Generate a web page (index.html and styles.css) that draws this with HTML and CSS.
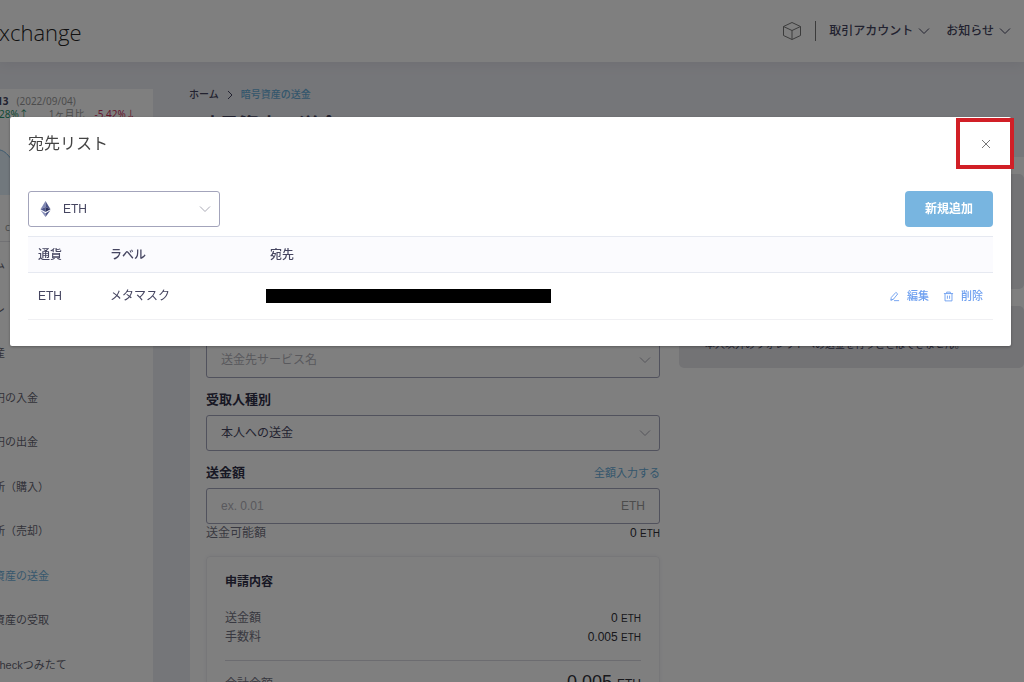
FILE: index.html
```html
<!DOCTYPE html>
<html lang="ja">
<head>
<meta charset="utf-8">
<meta name="viewport" content="width=device-width, initial-scale=1">
<title>宛先リスト</title>
<link rel="stylesheet" href="styles.css">
</head>
<body>
<header class="topbar">
  <div class="logo">xchange</div>
  <nav class="topnav">
    <svg class="cube" viewBox="0 0 20 20"><path d="M10 1.5 18.500 5.500V14.500L10 18.500 1.500 14.500V5.500ZM1.500 5.500 10 9.500 18.500 5.500M10 9.500V18.500"/></svg>
    <span class="rule"></span>
    <a class="navlink" href="#">取引アカウント<svg class="chev" viewBox="0 0 12 8"><path d="M1 1.500 6 6.500 11 1.500"/></svg></a>
    <a class="navlink" href="#">お知らせ<svg class="chev" viewBox="0 0 12 8"><path d="M1 1.500 6 6.500 11 1.500"/></svg></a>
  </nav>
</header>
<div class="shell">
  <aside class="sidebar">
    <div class="summary">
      <div class="price"><b>13</b><span class="date">(2022/09/04)</span></div>
      <div class="rates"><span class="up">28%↑</span><span class="period">1ヶ月比</span><span class="down">-5.42%↓</span></div>
      <svg class="chart" viewBox="0 0 153 70" preserveAspectRatio="none"><path class="area" d="M0 21C5 22 8 26 13 32L40 35 80 28 153 40V66H0Z"/><path class="curve" d="M0 21C5 22 8 26 13 32L40 35 80 28 153 40"/></svg>
      <div class="credit">c</div>
    </div>
    <nav class="menu">
      <a href="#">ム</a>
      <a href="#">レ</a>
      <a href="#">産</a>
      <a href="#">円の入金</a>
      <a href="#">円の出金</a>
      <a href="#">所（購入）</a>
      <a href="#">所（売却）</a>
      <a class="active" href="#">資産の送金</a>
      <a href="#">資産の受取</a>
      <a href="#">checkつみたて</a>
    </nav>
  </aside>
  <main class="main">
    <nav class="crumbs"><a href="#">ホーム</a><svg class="next" viewBox="0 0 6 10"><path d="M1 1 5 5 1 9"/></svg><a class="current" href="#">暗号資産の送金</a></nav>
    <h1>暗号資産の送金</h1>
    <div class="content">
      <form class="form">
        <div class="select">
          <select class="empty" aria-label="送金先サービス名"><option>送金先サービス名</option></select>
          <svg class="chev" viewBox="0 0 12 8"><path d="M1 1.500 6 6.500 11 1.500"/></svg>
        </div>
        <div class="labelrow"><label for="kind">受取人種別</label></div>
        <div class="select">
          <select id="kind"><option>本人への送金</option></select>
          <svg class="chev" viewBox="0 0 12 8"><path d="M1 1.500 6 6.500 11 1.500"/></svg>
        </div>
        <div class="labelrow"><label for="amount">送金額</label><a href="#">全額入力する</a></div>
        <div class="amount"><input id="amount" type="text" placeholder="ex. 0.01"><span>ETH</span></div>
        <div class="line available"><span>送金可能額</span><strong>0 <small>ETH</small></strong></div>
        <section class="receipt">
          <h2>申請内容</h2>
          <div class="line"><span>送金額</span><strong>0 <small>ETH</small></strong></div>
          <div class="line"><span>手数料</span><strong>0.005 <small>ETH</small></strong></div>
          <div class="line total"><span>合計金額</span><strong>0.005 <small>ETH</small></strong></div>
        </section>
      </form>
      <div class="notes">
        <div class="note tall"></div>
        <div class="note">本人以外のウォレットへの送金を行うことはできません。</div>
      </div>
    </div>
  </main>
</div>

<div class="overlay">
  <section class="modal" role="dialog" aria-labelledby="modal-title">
    <header class="modal-head">
      <h2 id="modal-title">宛先リスト</h2>
      <button class="close" type="button" aria-label="閉じる"><svg viewBox="0 0 10 10"><path d="M1 1 9 9M9 1 1 9"/></svg></button>
      <span class="highlight"></span>
    </header>
    <div class="tools">
      <div class="select coin">
        <svg class="eth" viewBox="0 0 10 16"><path fill="#8088b4" d="M5 0 0 8.200 5 6Z"/><path fill="#4c5488" d="M5 0 10 8.200 5 6Z"/><path fill="#4f578c" d="M0 8.200 5 6V11Z"/><path fill="#2b315f" d="M10 8.200 5 6V11Z"/><path fill="#8990ba" d="M0 9.300 5 12.200V16Z"/><path fill="#4c5488" d="M10 9.300 5 12.200V16Z"/></svg>
        <select aria-label="通貨"><option>ETH</option></select>
        <svg class="chev" viewBox="0 0 12 8"><path d="M1 1.500 6 6.500 11 1.500"/></svg>
      </div>
      <button class="add" type="button">新規追加</button>
    </div>
    <table class="list">
      <thead><tr><th class="c1">通貨</th><th class="c2">ラベル</th><th>宛先</th><th class="c4"></th></tr></thead>
      <tbody><tr>
        <td>ETH</td><td>メタマスク</td><td class="address"><div class="redacted"></div></td>
        <td><div class="actions">
          <button type="button"><svg viewBox="0 0 12 12"><path d="M2 10 2.500 7 7.500 1.500 9.500 3.200 4.800 9ZM2 10 4.800 9M5.500 10.500H11"/></svg>編集</button>
          <button type="button"><svg viewBox="0 0 12 12"><path d="M1 2.800H11M4 2.800V1.200H8V2.800M2.200 2.800V10.800H9.800V2.800M4.800 5V8.500M7.200 5V8.500"/></svg>削除</button>
        </div></td>
      </tr></tbody>
    </table>
  </section>
</div>
</body>
</html>
```
FILE: styles.css
```css
* { box-sizing: border-box; }
body {
  margin: 0;
  height: 100vh;
  overflow: hidden;
  background: #ebecf2;
  color: #454560;
  font: 12px/18px "Liberation Sans", "Noto Sans CJK JP", sans-serif;
}
a { color: inherit; text-decoration: none; }
h1, h2 { margin: 0; }
button, input, select { font: inherit; color: inherit; }
svg { fill: none; stroke: currentColor; flex: none; }

.topbar {
  display: flex;
  align-items: center;
  justify-content: space-between;
  height: 62px;
  padding-right: 13px;
  background: #fff;
  box-shadow: 0 1px 12px #d9d9e3;
  position: relative;
}
.logo { font: 300 22px/32px "Open Sans", "Noto Sans", sans-serif; color: #222; padding-top: 2px; margin-left: -1px; }
.topnav { display: flex; align-items: center; font-weight: 500; }
.cube { width: 20px; height: 20px; color: #777; }
.rule { width: 1px; height: 20px; background: #777; margin: 0 13px; }
.navlink { display: flex; align-items: center; gap: 5px; }
.navlink + .navlink { margin-left: 16px; }
.chev { width: 12px; height: 8px; }

.shell { display: grid; grid-template-columns: 153px minmax(0, 1fr); gap: 37px; }
.sidebar { margin-top: 27px; background: #fff; }
.summary { height: 153px; padding-top: 5px; border-bottom: 1px solid #e2e2e8; font: 10px/13px "Noto Sans", "Noto Sans CJK JP", sans-serif; overflow: hidden; }
.price { display: flex; gap: 8px; margin-left: -3px; padding-top: 1px; }
.date, .period { color: #999; }
.rates { display: flex; margin-left: -1px; gap: 16px; white-space: nowrap; }
.up { color: #27936c; }
.down { color: #c9305c; }
.period { margin-right: -6px; padding-left: 4px; }
.chart { display: block; width: 100%; height: 70px; margin-top: 8px; }
.area { fill: #e3f0fa; stroke: none; }
.curve { stroke: #79b5de; }
.credit { padding: 22px 0 0 5px; color: #999; }
.menu { display: grid; grid-auto-rows: 1fr; height: 445px; font-size: 11px; color: #666673; }
.menu a { display: flex; align-items: center; margin-left: -6px; white-space: nowrap; }
.menu .active { color: #6fb1db; }

.crumbs { display: flex; align-items: center; gap: 8px; margin-top: 24px; margin-left: -1px; font-size: 10px; font-weight: 500; }
.next { width: 6px; height: 10px; }
.crumbs .current { color: #67acd9; }
h1 { font-size: 20px; line-height: 32px; padding: 6px 0 15px 9px; }
.content {
  display: grid;
  grid-template-columns: minmax(0, 454fr) minmax(0, 345fr);
  gap: 19px;
  padding-left: 16px;
  background: #fff;
}
.form { padding-top: 185px; }
.select { position: relative; }
.select select {
  display: block;
  appearance: none;
  width: 100%;
  height: 36px;
  padding: 0 36px 0 14px;
  border: 1px solid #a3a4bb;
  border-radius: 3px;
  background: #fff;
}
.select .chev { position: absolute; right: 9px; top: 14px; color: #aaaab6; pointer-events: none; }
.select .empty { color: #b2b2ba; }
.labelrow { display: flex; align-items: center; justify-content: space-between; height: 37px; padding-top: 7px; }
.labelrow label { font-size: 13px; font-weight: 700; color: #303048; }
.labelrow a { font-size: 11px; color: #67acd9; }
.amount { display: flex; align-items: center; height: 36px; border: 1px solid #a3a4bb; border-radius: 3px; padding: 0 14px; color: #999; }
.amount input { flex: 1; min-width: 0; border: 0; padding: 0; background: none; color: #454560; }
.amount input::placeholder { color: #b2b2ba; }
.line { display: flex; align-items: baseline; justify-content: space-between; color: #737382; }
.line strong { font-weight: 400; color: #303038; }
.line small { font-size: 10px; }
.receipt { margin-top: 13px; height: 170px; padding: 16px 18px; border: 1px solid #eeeef3; border-radius: 4px; box-shadow: 0 0 5px #f0f0f5; }
.receipt h2 { font-size: 12px; line-height: 18px; color: #303048; margin-bottom: 18px; }
.total { margin-top: 13px; padding-top: 9px; border-top: 1px solid #d9d9e1; line-height: 24px; }
.total strong { font-size: 18px; }
.total small { font-size: 12px; }
.notes { display: flex; flex-direction: column; gap: 17px; padding-top: 17px; }
.note { height: 62px; padding: 31px 26px 0; border-radius: 5px; background: #e6e6eb; font-size: 10px; line-height: 16px; white-space: nowrap; overflow: hidden; }
.tall { height: 115px; }

.overlay { position: fixed; inset: 0; padding: 117px 13px 0 10px; background: rgb(0 0 0 / 50%); }
.modal { padding: 0 18px 26px; background: #fff; border-radius: 2px; box-shadow: 0 1px 3px rgb(0 0 0 / 30%); }
.modal-head { position: relative; display: flex; align-items: center; justify-content: space-between; height: 54px; }
.modal-head h2 { font-size: 16px; line-height: 24px; font-weight: 400; color: #444; }
.close { display: flex; padding: 2px; border: 0; background: none; color: #777; }
.close svg { width: 10px; height: 10px; }
.highlight { position: absolute; right: -21px; top: 1px; width: 58px; height: 51px; border: 4px solid #d11f26; pointer-events: none; }
.tools { display: flex; justify-content: space-between; padding: 20px 0 9px; }
.coin { width: 192px; }
.coin select { padding-left: 34px; }
.eth { position: absolute; left: 12px; top: 10px; width: 11px; height: 16px; stroke: none; }
.add { width: 88px; height: 36px; padding: 0; border: 0; border-radius: 4px; background: #78b5e0; color: #fff; font-weight: 700; }
.list { width: 100%; table-layout: fixed; border-collapse: collapse; }
.list th, .list td { padding: 0 10px; text-align: left; }
.list th { height: 36px; font-weight: 500; background: #fbfbfe; border-top: 1px solid #e6e9f1; border-bottom: 1px solid #e6e9f1; }
.list td { height: 47px; border-bottom: 1px solid #f0f0f3; }
.c1 { width: 72px; }
.c2 { width: 160px; }
.c4 { width: 126px; }
.list .address { padding-left: 6px; }
.redacted { width: 285px; max-width: 100%; height: 14px; background: #000; }
.actions { display: flex; justify-content: flex-end; gap: 14px; white-space: nowrap; }
.actions button { display: flex; align-items: center; gap: 7px; padding: 0; border: 0; background: none; font-size: 11px; font-weight: 500; color: #6d9ff0; }
.actions svg { width: 11px; height: 11px; }
```
